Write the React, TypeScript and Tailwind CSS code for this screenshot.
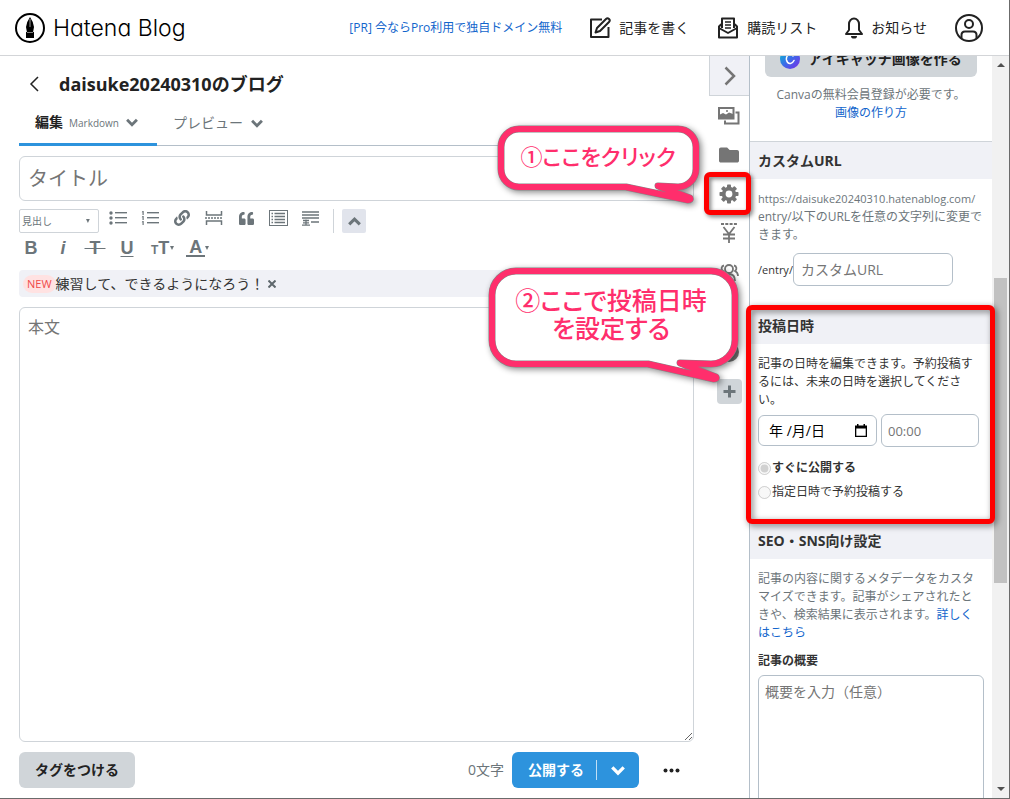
import type { ReactNode } from 'react';
import { FaFolder, FaLink, FaQuoteLeft } from 'react-icons/fa';

function Logo() {
  return (
    <a href="#" className="flex items-center gap-2 text-black">
      <svg width="30" height="30" viewBox="0 0 30 30">
        <circle cx="15" cy="15" r="14" fill="none" stroke="currentColor" strokeWidth="2" />
        <path d="M15 4 Q11.5 9 11 14 L12 19.5 H18 L19 14 Q18.5 9 15 4 Z M11 19 H19 V25 H11 Z" fill="currentColor" />
        <path d="M15 6 V14" stroke="#999" strokeWidth="1" />
      </svg>
      <span className="font-['Inter'] text-[23px] leading-8 font-light [font-feature-settings:'cv11']">Hatena Blog</span>
    </a>
  );
}

function Chevron({ up = false, size = 11 }: { up?: boolean; size?: number }) {
  return (
    <svg width={size} height={size} viewBox="0 0 11 11" fill="none" stroke="currentColor" strokeWidth="2.6">
      <path d={up ? 'M1 8 L5.5 3.5 L10 8' : 'M1 3.5 L5.5 8 L10 3.5'} />
    </svg>
  );
}

function PencilIcon() {
  return (
    <svg width="21" height="22" viewBox="1 0 21 22" fill="none" stroke="currentColor" strokeWidth="2" strokeLinejoin="round">
      <path d="M13 2.5 H2 V20 H19.5 V10" />
      <path d="M6.5 15.5 L8 11 L17 2 A1.9 1.9 0 0 1 20 5 L11 14 Z" />
    </svg>
  );
}

function MailIcon() {
  return (
    <svg width="22" height="22" viewBox="0 0 22 22" fill="none" stroke="currentColor" strokeWidth="2" strokeLinejoin="round">
      <path d="M5 11 V1.5 H17 V11" />
      <path d="M8 5 H14 M8 8 H14 M8 11 H14" strokeWidth="1.5" />
      <path d="M5 7.5 H4 L2 9.5 V20.5 H20 V9.5 L18 7.5 H17" />
      <path d="M2 11 L11 16 L20 11" />
    </svg>
  );
}

function BellIcon() {
  return (
    <svg width="18" height="22" viewBox="0 0 18 22" fill="none" stroke="currentColor" strokeWidth="2" strokeLinejoin="round">
      <path d="M4 13 V7 A5 5.5 0 0 1 14 7 V13 L17 17 H1 Z" />
      <path d="M6 19 A3 2.6 0 0 0 12 19 Z" fill="currentColor" stroke="none" />
    </svg>
  );
}

function UserIcon() {
  return (
    <svg width="28" height="28" viewBox="0 0 28 28" fill="none" stroke="currentColor" strokeWidth="2">
      <circle cx="14" cy="14" r="13" />
      <circle cx="14" cy="10" r="4" />
      <path d="M6.5 24 V21 Q6.5 17.5 10 17.5 H18 Q21.5 17.5 21.5 21 V24" />
    </svg>
  );
}

function ListIcon({ numbered = false }: { numbered?: boolean }) {
  return (
    <svg width="18" height="14" viewBox="0 0 18 14" fill="currentColor">
      {[1, 6, 11].map((y) => (
        <g key={y}>
          {numbered ? <path d={`M1.5 ${y - 1} h1.2 v4 h-1.2 v-2.8 h-.8 Z`} /> : <circle cx="2" cy={y + 1} r="1.7" />}
          <rect x="6" y={y} width="12" height="1.4" />
        </g>
      ))}
    </svg>
  );
}

function PageBreakIcon() {
  return (
    <svg width="18" height="16" viewBox="0 0 18 16" fill="none" stroke="currentColor" strokeWidth="1.5">
      <path d="M1.5 1 V5 H16.5 V1 M1.5 15 V11 H16.5 V15" />
      <path d="M0 8 H18" strokeDasharray="2 1" />
    </svg>
  );
}

function ContentsIcon() {
  return (
    <svg width="19" height="16" viewBox="0 0 19 16" fill="none" stroke="currentColor" strokeWidth="1">
      <rect x=".5" y=".5" width="18" height="15" />
      <path d="M5.5 3.5 H16 M5.5 6.5 H16 M5.5 9.5 H16 M5.5 12.5 H16" strokeWidth="1.3" />
      <path d="M2.5 3.5 H4 M2.5 6.5 H4 M2.5 9.5 H4 M2.5 12.5 H4" strokeWidth="1.3" />
    </svg>
  );
}

function FootnoteIcon() {
  return (
    <svg width="17" height="15" viewBox="0 0 17 15" fill="none" stroke="currentColor" strokeWidth="1.3">
      <path d="M0 1 H17 M0 4 H17 M0 7 H17" />
      <path d="M1 9.5 H7 M4 8.5 V14 M1 11.8 H7 M0 14.2 H8 M9 11 H17" />
    </svg>
  );
}

function ImagesIcon() {
  return (
    <svg width="22" height="18" viewBox="0 0 22 18" fill="none" stroke="currentColor" strokeWidth="2">
      <path d="M17.5 5.5 H20.5 V16.5 H7 V13.5" />
      <rect x="1" y="1" width="14.5" height="10.5" />
      <path d="M1 8 L5 6 L8 7.5 L11 5.5 L15 7 V12 H1 Z" fill="currentColor" stroke="none" />
      <circle cx="9" cy="4" r="1" fill="currentColor" stroke="none" />
    </svg>
  );
}

function GearIcon() {
  return (
    <svg width="20" height="20" viewBox="0 0 20 20" fill="currentColor">
      {[0, 45, 90, 135].map((angle) => (
        <g key={angle} transform={`rotate(${angle} 10 10)`}>
          <rect x="8" y=".5" width="4" height="4" rx=".8" />
          <rect x="8" y="15.5" width="4" height="4" rx=".8" />
        </g>
      ))}
      <circle cx="10" cy="10" r="5.3" fill="none" stroke="currentColor" strokeWidth="3.8" />
    </svg>
  );
}

function YenIcon() {
  return (
    <svg width="16" height="20" viewBox="0 0 16 20" fill="none" stroke="currentColor" strokeWidth="2">
      <path d="M0 1 H16" strokeDasharray="3 1.3" />
      <path d="M2.5 4 L8 11 L13.5 4 M8 10 V20 M2 11.5 H14 M2 15.5 H14" strokeWidth="1.8" />
    </svg>
  );
}

function PeopleIcon() {
  return (
    <svg width="20" height="18" viewBox="0 0 20 18" fill="none" stroke="currentColor" strokeWidth="1.8">
      <circle cx="10" cy="6" r="4" />
      <path d="M4 18 Q4 11 10 11 Q16 11 16 18" />
      <path d="M5 2.5 A3 3 0 0 0 4 8 Q1 9.5 1 13 M15 2.5 A3 3 0 0 1 16 8 Q19 9.5 19 13" />
    </svg>
  );
}

function CanvaIcon() {
  return (
    <svg width="20" height="20" viewBox="0 0 20 20">
      <defs>
        <linearGradient id="canva" x1="0" y1="0" x2="1" y2="1">
          <stop offset="0" stopColor="#00c4cc" />
          <stop offset=".5" stopColor="#3a6be8" />
          <stop offset="1" stopColor="#7d2ae8" />
        </linearGradient>
      </defs>
      <circle cx="10" cy="10" r="10" fill="url(#canva)" />
      <path d="M13 7 A2.6 2.6 0 0 0 10 5 A4.5 5 0 0 0 6.5 11 Q7.5 15 10.5 14.5 Q12.8 14 14 11.5" fill="none" stroke="#fff" strokeWidth="1.5" strokeLinecap="round" />
    </svg>
  );
}

function CalendarIcon() {
  return (
    <svg width="12" height="13" viewBox="0 0 12 13" fill="currentColor">
      <path d="M2 0 H3.5 V1.5 H8.5 V0 H10 V1.5 H12 V13 H0 V1.5 H2 Z M1.3 4.5 V11.7 H10.7 V4.5 Z" fillRule="evenodd" />
    </svg>
  );
}

const headerLinks = [
  { label: '記事を書く', icon: <PencilIcon /> },
  { label: '購読リスト', icon: <MailIcon /> },
  { label: 'お知らせ', icon: <BellIcon /> },
];

const insertTools = [
  { label: 'リスト', icon: <ListIcon /> },
  { label: '番号付きリスト', icon: <ListIcon numbered /> },
  { label: 'リンク', icon: <FaLink size={16} /> },
  { label: '続きを読む', icon: <PageBreakIcon /> },
  { label: '引用', icon: <FaQuoteLeft size={15} /> },
  { label: '目次', icon: <ContentsIcon /> },
  { label: '脚注', icon: <FootnoteIcon /> },
];

const railItems = [
  { label: '写真を投稿', icon: <ImagesIcon /> },
  { label: 'カテゴリー', icon: <FaFolder size={20} /> },
  { label: '編集オプション', icon: <GearIcon /> },
  { label: '収益化', icon: <YenIcon /> },
  { label: 'グループ', icon: <PeopleIcon /> },
];

function Header() {
  return (
    <header className="flex h-14 shrink-0 items-center justify-between border-b border-[#d3d5d8] pr-[26px] pl-[15px]">
      <Logo />
      <nav className="flex items-center gap-7 text-sm text-[#222]">
        <a href="#" className="text-xs text-[#1265cc]">[PR] 今ならPro利用で独自ドメイン無料</a>
        {headerLinks.map((link) => (
          <a key={link.label} href="#" className="flex items-center gap-2">
            {link.icon}
            {link.label}
          </a>
        ))}
        <button aria-label="アカウント"><UserIcon /></button>
      </nav>
    </header>
  );
}

function ToolButton({ label, children }: { label: string; children: ReactNode }) {
  return (
    <button aria-label={label} className="flex h-[18px] w-8 items-center justify-center">
      {children}
    </button>
  );
}

function LetterButton({ label, children }: { label: string; children: ReactNode }) {
  return (
    <button aria-label={label} className="mr-2 flex h-[18px] w-6 items-center justify-center text-lg leading-[18px]">
      {children}
    </button>
  );
}

function Caret() {
  return (
    <svg width="4" height="4" viewBox="0 0 4 4" fill="currentColor"><path d="M0 0 H4 L2 4 Z" /></svg>
  );
}

function Toolbar() {
  return (
    <div className="mt-2 text-[#6c757a]">
      <div className="flex">
        <div className="flex h-6 w-20 items-center rounded-xs border border-[#cfd4d9] pr-2 pl-[2px]">
          <select aria-label="見出し" className="w-full appearance-none text-[10px] leading-4">
            <option>見出し</option>
          </select>
          <Caret />
        </div>
        <div className="ml-[3px] flex">
          {insertTools.map((tool) => (
            <ToolButton key={tool.label} label={tool.label}>{tool.icon}</ToolButton>
          ))}
        </div>
        <div className="ml-[7px] w-px bg-[#cfd4d9]" />
        <button aria-label="閉じる" className="ml-2 flex size-6 items-center justify-center rounded-xs bg-[#e1e4ec]">
          <Chevron up size={13} />
        </button>
      </div>
      <div className="mt-[6px] flex font-['Liberation_Sans'] font-bold">
        <LetterButton label="太字">B</LetterButton>
        <LetterButton label="斜体"><span className="italic">i</span></LetterButton>
        <LetterButton label="取り消し線"><span className="line-through">&nbsp;T&nbsp;</span></LetterButton>
        <LetterButton label="下線"><span className="underline underline-offset-2">U</span></LetterButton>
        <button aria-label="文字サイズ" className="ml-1 flex h-[18px] items-center gap-px">
          <span className="flex items-baseline leading-[18px]">
            <span className="text-xs">T</span>
            <span className="text-lg leading-[18px]">T</span>
          </span>
          <Caret />
        </button>
        <button aria-label="文字色" className="ml-3 flex h-[18px] items-center">
          <span className="border-b-2 border-current px-[3px] text-lg leading-4">A</span>
          <Caret />
        </button>
      </div>
    </div>
  );
}

function Editor() {
  return (
    <main className="flex min-w-0 flex-1 flex-col pr-[15px] pb-[10px] pl-[19px]">
      <div className="mt-4 flex h-6 items-center gap-[18px] text-[#222]">
        <a href="#" aria-label="戻る" className="ml-[10px]">
          <svg width="12" height="16" viewBox="0 0 12 16" fill="none" stroke="currentColor" strokeWidth="1.5"><path d="M9 1 L2 8 L9 15" /></svg>
        </a>
        <h1 className="text-lg leading-6 font-bold">daisuke20240310のブログ</h1>
      </div>
      <div className="mt-1 flex h-[46px] shrink-0 border-b border-[#b4bfc9] text-[#6c757a]">
        <button className="-mb-px flex w-[138px] items-center gap-[7px] border-b-3 border-[#2d93dd] pl-4">
          <span className="flex items-baseline gap-[6px]">
            <span className="text-sm font-bold text-[#222]">編集</span>
            <span className="text-[10px]">Markdown</span>
          </span>
          <Chevron size={12} />
        </button>
        <button className="flex items-center gap-2 pl-4 text-sm">
          プレビュー
          <Chevron size={12} />
        </button>
      </div>
      <input
        aria-label="タイトル"
        placeholder="タイトル"
        className="mt-[10px] h-[45px] w-full shrink-0 rounded-md border border-[#cfd4d9] px-2 text-xl placeholder:text-[#757575]"
      />
      <Toolbar />
      <div className="mt-[13px] flex h-[27px] shrink-0 items-center rounded-sm bg-[#f0f1f6] pl-1 text-sm text-[#333]">
        <span className="rounded-full bg-[#ffe2e2] px-1 text-[11px] leading-[18px] text-[#f04a4a]">NEW</span>
        <a href="#">練習して、できるようになろう！</a>
        <button aria-label="閉じる" className="ml-1">
          <svg width="8" height="8" viewBox="0 0 8 8" stroke="#5f686d" strokeWidth="2"><path d="M.5 .5 L7.5 7.5 M7.5 .5 L.5 7.5" /></svg>
        </button>
      </div>
      <textarea
        aria-label="本文"
        placeholder="本文"
        className="mt-[10px] min-h-0 w-full flex-1 rounded-md border border-[#cfd4d9] px-2 py-[7px] text-base placeholder:text-[#757575]"
      />
      <div className="mt-[10px] flex h-9 shrink-0 items-center">
        <button className="h-9 rounded-md bg-[#d0d5d9] px-4 text-sm font-bold text-[#222]">タグをつける</button>
        <span className="ml-auto text-sm text-[#6c757a]">0文字</span>
        <div className="ml-2 flex h-9 items-center rounded-md bg-[#2d93dd] text-white">
          <button className="pr-3 pl-4 text-sm font-bold">公開する</button>
          <span className="h-5 w-px bg-white/70" />
          <button aria-label="公開オプション" className="px-[14px]"><Chevron size={14} /></button>
        </div>
        <button aria-label="その他" className="mr-[14px] ml-6">
          <svg width="17" height="5" viewBox="0 0 17 5" fill="#222">
            <circle cx="2.5" cy="2.5" r="2" />
            <circle cx="8.5" cy="2.5" r="2" />
            <circle cx="14.5" cy="2.5" r="2" />
          </svg>
        </button>
      </div>
    </main>
  );
}

function Rail() {
  return (
    <div className="flex w-[41px] shrink-0 flex-col border-r border-[#b4bfc9] text-[#757575]">
      <button aria-label="サイドバーを閉じる" className="flex h-10 w-full items-center justify-center border-b border-l border-[#cfd4d9] bg-[#f0f1f6]">
        <svg width="12" height="20" viewBox="0 0 12 20" fill="none" stroke="currentColor" strokeWidth="2.5"><path d="M1.5 1.5 L10 10 L1.5 18.5" /></svg>
      </button>
      {railItems.map((item) => (
        <button key={item.label} aria-label={item.label} className="flex h-[39px] w-full items-center justify-center">
          {item.icon}
        </button>
      ))}
      <button aria-label="Amazon" className="flex h-[39px] w-full items-center justify-center">
        <svg width="18" height="18" viewBox="0 0 18 18" fill="currentColor"><path d="M1 3 H17 V15 H1 Z" /></svg>
      </button>
      <button aria-label="Twitter" className="flex h-[43px] w-full items-center justify-center">
        <svg width="20" height="20" viewBox="0 0 20 20" fill="currentColor"><circle cx="10" cy="10" r="10" /></svg>
      </button>
      <button aria-label="追加" className="mx-auto mt-[6px] flex h-[25px] w-[25px] items-center justify-center rounded-sm bg-[#d0d5d9] text-[#6c757a]">
        <svg width="13" height="13" viewBox="0 0 13 13" stroke="currentColor" strokeWidth="3"><path d="M6.5 .5 V12.5 M.5 6.5 H12.5" /></svg>
      </button>
    </div>
  );
}

function Section({ title, children }: { title: string; children: ReactNode }) {
  return (
    <section className="border-t border-[#cfd4d9]">
      <h2 className="bg-[#f0f1f6] px-2 py-2 text-sm leading-[21px] font-bold text-[#333]">{title}</h2>
      <div className="px-2 pt-[11px] pb-5">{children}</div>
    </section>
  );
}

function Sidebar() {
  return (
    <aside className="min-h-0 w-[242px] shrink-0 overflow-hidden text-xs leading-[18px] text-[#333]">
      <div className="-mt-[15px] px-[15px] pb-[19px] text-center">
        <button className="flex h-9 w-full items-center justify-center gap-2 rounded-md bg-[#d0d5d9] text-sm font-bold text-[#222]">
          <CanvaIcon />
          アイキャッチ画像を作る
        </button>
        <p className="mt-[9px] text-[#6c757a]">Canvaの無料会員登録が必要です。</p>
        <a href="#" className="text-[#1265cc]">画像の作り方</a>
      </div>
      <Section title="カスタムURL">
        <p className="text-[#6c757a]">
          <span className="text-[11px]">https://daisuke20240310.hatenablog.com/</span>
          <wbr />
          entry/以下のURLを任意の文字列に変更できます。
        </p>
        <div className="mt-[9px] flex items-center">
          <label htmlFor="custom-url" className="text-[11px]">/entry/</label>
          <input
            id="custom-url"
            placeholder="カスタムURL"
            className="h-[33px] w-40 rounded-md border border-[#b4bfc9] px-[7px] text-sm placeholder:text-[#757575]"
          />
        </div>
      </Section>
      <Section title="投稿日時">
        <p>記事の日時を編集できます。予約投稿するには、未来の日時を選択してください。</p>
        <div className="mt-[5px] flex items-center gap-1">
          <div className="flex h-[31px] w-[119px] items-center rounded-md border border-[#b4bfc9] pr-[9px] pl-[10px] text-black">
            <input aria-label="日付" defaultValue="年 /月/日" className="min-w-0 flex-1 text-sm" />
            <button aria-label="カレンダー"><CalendarIcon /></button>
          </div>
          <input
            aria-label="時刻"
            placeholder="00:00"
            className="h-[33px] w-[98px] rounded-md border border-[#b4bfc9] px-[6px] text-[13px] placeholder:text-[#757575]"
          />
        </div>
        <div className="mt-3 flex flex-col gap-[6px]">
          <label className="flex items-center gap-px font-bold">
            <input type="radio" name="publish" defaultChecked disabled className="size-[13px]" />
            すぐに公開する
          </label>
          <label className="flex items-center gap-px">
            <input type="radio" name="publish" disabled className="size-[13px]" />
            指定日時で予約投稿する
          </label>
        </div>
      </Section>
      <Section title="SEO・SNS向け設定">
        <p className="text-[#6c757a]">
          記事の内容に関するメタデータをカスタマイズできます。記事がシェアされたときや、検索結果に表示されます。
          <a href="#" className="text-[#1265cc]">詳しくはこちら</a>
        </p>
        <label htmlFor="summary" className="mt-[10px] block font-bold">記事の概要</label>
        <textarea
          id="summary"
          placeholder="概要を入力（任意）"
          className="mt-[5px] h-40 w-full rounded-md border border-[#b4bfc9] px-[6px] py-[7px] text-sm leading-[18px] placeholder:text-[#757575]"
        />
      </Section>
    </aside>
  );
}

function Scrollbar() {
  return (
    <div className="flex w-[17px] shrink-0 flex-col items-center bg-[#f1f1f1] text-[#505050]">
      <svg width="8" height="17" viewBox="0 0 8 17" fill="currentColor"><path d="M0 11 L4 7 L8 11 Z" /></svg>
      <div className="grow-[205]" />
      <div className="w-[13px] grow-[305] bg-[#c1c1c1]" />
      <div className="grow-[198]" />
      <svg width="8" height="17" viewBox="0 0 8 17" fill="currentColor"><path d="M0 6 L4 10 L8 6 Z" /></svg>
    </div>
  );
}

function Bubble({ width, height, outline }: { width: number; height: number; outline: string }) {
  return (
    <svg
      width={width}
      height={height}
      viewBox={`0 0 ${width} ${height}`}
      strokeLinejoin="round"
      className="absolute inset-0 drop-shadow-[2px_2px_3px_rgba(0,0,0,0.45)]"
    >
      <path d={outline} fill="#fff" stroke="#858585" strokeWidth="7" />
      <path d={outline} fill="none" stroke="currentColor" strokeWidth="6" />
    </svg>
  );
}

// Notes that sit on top of the editor
function Annotations() {
  return (
    <div className="pointer-events-none absolute inset-0 text-[#ff2e6c]">
      <div className="absolute top-[172px] right-[258px] h-[43px] w-[47px] rounded-md border-5 border-[#f00] drop-shadow-[2px_2px_2px_rgba(0,0,0,0.5)]" />
      <div className="absolute top-[305px] right-[14px] h-[219px] w-[249px] rounded-md border-5 border-[#f00] drop-shadow-[2px_2px_3px_rgba(0,0,0,0.5)]" />
      <div className="absolute top-[120px] right-[299px] h-[90px] w-[220px]">
        <Bubble
          width={220}
          height={90}
          outline="M29 9 H188 A18 18 0 0 1 206 27 V49 A18 18 0 0 1 188 67 L168 66 L200 78 Q201 80 198 80 L136 67 H29 A18 18 0 0 1 11 49 V27 A18 18 0 0 1 29 9 Z"
        />
        <p className="relative pt-5 pr-1 text-center text-[22px] leading-8 font-medium [font-feature-settings:'palt']">①ここをクリック</p>
      </div>
      <div className="absolute top-[260px] right-[259px] h-[130px] w-[270px]">
        <Bubble
          width={270}
          height={130}
          outline="M36 11 H231 A24 24 0 0 1 255 35 V80 A24 24 0 0 1 231 104 L200 103 L236 117 Q237 119 234 119 L168 104 H36 A24 24 0 0 1 12 80 V35 A24 24 0 0 1 36 11 Z"
        />
        <p className="relative pt-[26px] pr-2 text-center text-[25px] leading-7 font-medium [font-feature-settings:'palt']">
          ②ここで投稿日時
          <br />
          を設定する
        </p>
      </div>
    </div>
  );
}

export default function App() {
  return (
    <div className="relative flex h-screen flex-col overflow-hidden border-r border-b border-[#6b6b6b] bg-white font-['Open_Sans','Noto_Sans_CJK_JP',sans-serif]">
      <Header />
      <div className="flex min-h-0 flex-1">
        <Editor />
        <Rail />
        <Sidebar />
        <Scrollbar />
      </div>
      <Annotations />
    </div>
  );
}
